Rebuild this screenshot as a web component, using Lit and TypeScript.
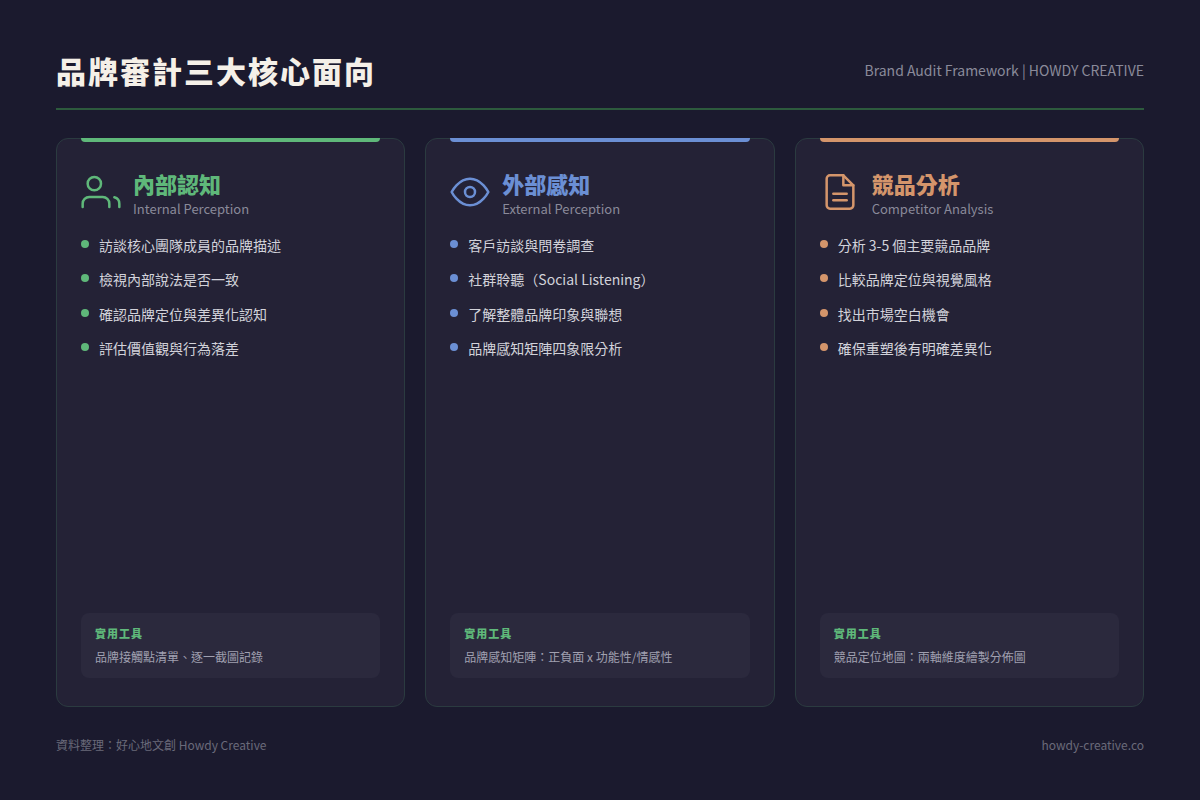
import { LitElement, html, css, svg } from "lit";
import { customElement } from "lit/decorators.js";

const cards = [
  {
    c: "#5fb87a", t: "內部認知", s: "Internal Perception",
    icon: svg`<circle cx="8" cy="7" r="4"/><path d="M1 21v-2a4 4 0 0 1 4-4h8a4 4 0 0 1 4 4v2"/><path d="M23 21v-2a4 4 0 0 0-3-3.87"/>`,
    items: ["訪談核心團隊成員的品牌描述", "檢視內部說法是否一致", "確認品牌定位與差異化認知", "評估價值觀與行為落差"],
    tool: "品牌接觸點清單、逐一截圖記錄",
  },
  {
    c: "#6b8fd4", t: "外部感知", s: "External Perception",
    icon: svg`<path d="M1 12s4-8 11-8 11 8 11 8-4 8-11 8-11-8-11-8z"/><circle cx="12" cy="12" r="3"/>`,
    items: ["客戶訪談與問卷調查", "社群聆聽（Social Listening）", "了解整體品牌印象與聯想", "品牌感知矩陣四象限分析"],
    tool: "品牌感知矩陣：正負面 x 功能性/情感性",
  },
  {
    c: "#d4956b", t: "競品分析", s: "Competitor Analysis",
    icon: svg`<path d="M14 2H6a2 2 0 0 0-2 2v16a2 2 0 0 0 2 2h12a2 2 0 0 0 2-2V8z"/><path d="M14 2v6h6"/><path d="M16 13H8"/><path d="M16 17H8"/>`,
    items: ["分析 3-5 個主要競品品牌", "比較品牌定位與視覺風格", "找出市場空白機會", "確保重塑後有明確差異化"],
    tool: "競品定位地圖：兩軸維度繪製分佈圖",
  },
];

@customElement("app-root")
export class AppRoot extends LitElement {
  static styles = css`
    :host { display: block; width: 1200px; height: 800px; background: #1b1a2e; font-family: "Noto Sans CJK TC", "Noto Sans", sans-serif; }
    .page { box-sizing: border-box; width: 1200px; height: 800px; padding: 48px 56px 45px; display: flex; flex-direction: column; }
    .head { display: flex; justify-content: space-between; align-items: center; height: 44px; padding-bottom: 16px; border-bottom: 2px solid #2d5a3d; margin-bottom: 28px; }
    h1 { margin: 0; font-size: 30px; font-weight: 900; color: #f5f0e8; letter-spacing: 2px; line-height: 44px; }
    .sub { font-size: 14px; color: #8a8a9a; }
    .cols { flex: 1; display: grid; grid-template-columns: repeat(3, 1fr); gap: 20px; min-height: 0; }
    .card { position: relative; box-sizing: border-box; background: #242236; border: 1px solid #2b3b40; border-radius: 12px; padding: 28px 24px; display: flex; flex-direction: column; }
    .bar { position: absolute; top: -1px; left: 24px; right: 24px; height: 4px; border-radius: 0 0 4px 4px; }
    .ch { display: flex; align-items: center; gap: 12px; margin-bottom: 17px; }
    .ch svg { width: 40px; height: 40px; fill: none; stroke-width: 1.5; stroke-linecap: round; stroke-linejoin: round; flex: none; }
    .ct { font-size: 22px; font-weight: 900; line-height: 32px; }
    .cs { font-size: 13px; color: #8a8a9a; line-height: 18px; position: relative; top: 1px; }
    ul { list-style: none; margin: 0; padding: 0; display: flex; flex-direction: column; gap: 12px; flex: 1; }
    li { display: flex; gap: 10px; font-size: 14px; font-weight: 400; line-height: 22.4px; color: #d2d2da; }
    .dot { width: 8px; height: 8px; border-radius: 50%; margin-top: 6px; flex: none; }
    .tool { background: #2b293d; border-radius: 8px; padding: 12px 14px 11px; }
    .tl { font-size: 11px; font-weight: 900; letter-spacing: 1px; color: #5fb87a; line-height: 16px; margin-bottom: 6px; }
    .tt { font-size: 12px; color: #a0a0b0; line-height: 20px; }
    .foot { display: flex; justify-content: space-between; margin-top: 28px; font-size: 12px; color: #6a6a7a; line-height: 20px; }
  `;
  render() {
    return html`<div class="page">
      <div class="head"><h1>品牌審計三大核心面向</h1><div class="sub">Brand Audit Framework | HOWDY CREATIVE</div></div>
      <div class="cols">
        ${cards.map((k) => html`<div class="card">
          <div class="bar" style="background:${k.c}"></div>
          <div class="ch">
            <svg viewBox="0 0 24 24" style="stroke:${k.c}">${k.icon}</svg>
            <div><div class="ct" style="color:${k.c}">${k.t}</div><div class="cs">${k.s}</div></div>
          </div>
          <ul>${k.items.map((i) => html`<li><span class="dot" style="background:${k.c}"></span><span>${i}</span></li>`)}</ul>
          <div class="tool"><div class="tl">實用工具</div><div class="tt">${k.tool}</div></div>
        </div>`)}
      </div>
      <div class="foot"><span>資料整理：好心地文創 Howdy Creative</span><span>howdy-creative.co</span></div>
    </div>`;
  }
}
